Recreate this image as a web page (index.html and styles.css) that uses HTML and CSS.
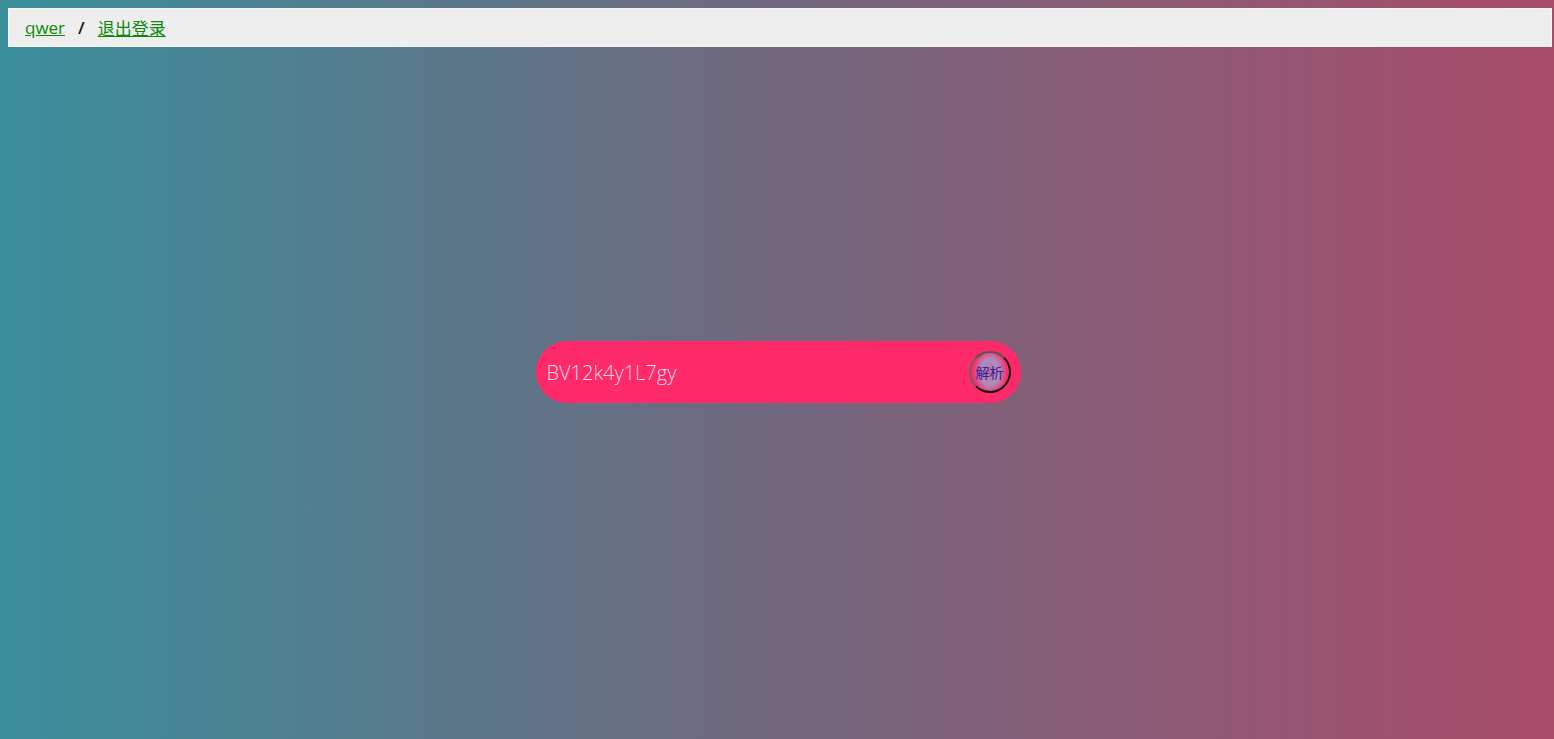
FILE: index.html
```html
<!DOCTYPE html>
<html lang="zh">
<head>
<meta charset="utf-8">
<title>解析</title>
<link rel="stylesheet" href="styles.css">
</head>
<body>
<div class="topbar">
  <a href="#" class="link">qwer</a>
  <span class="sep">/</span>
  <a href="#" class="link">退出登录</a>
</div>
<main class="stage">
  <form class="pill">
    <input class="field" type="text" value="BV12k4y1L7gy">
    <button class="go" type="button">解析</button>
  </form>
</main>
</body>
</html>
```
FILE: styles.css
```css
html, body {
  height: 100%;
}
html {
  background: linear-gradient(to right, #3a8f9b 0%, #6d6a80 46%, #a94c6a 100%);
}
body {
  margin: 8px 2px 8px 8px;
  height: calc(100% - 16px);
  background: transparent;
  font-family: "Open Sans", "Noto Sans CJK SC", sans-serif;
  display: flex;
  flex-direction: column;
}
.topbar {
  background: #eeeeee;
  height: 39px;
  box-sizing: border-box;
  border: 1px solid #f4f4f4;
  padding: 0 16px;
  display: flex;
  align-items: center;
  font-size: 17px;
}
.link {
  color: #078a07;
  text-decoration: underline;
}
.sep {
  margin: 0 13px;
  color: #111;
  font-weight: 600;
}
.stage {
  flex: 1;
  display: flex;
  justify-content: center;
  align-items: center;
  padding-right: 4px;
  padding-bottom: 34px;
}
.pill {
  width: 485px;
  height: 62px;
  border-radius: 31px;
  background: #fe2a6a;
  display: flex;
  align-items: center;
  box-sizing: border-box;
  padding: 0 10px 0 11px;
  margin: 0;
}
.field {
  flex: 1;
  border: none;
  outline: none;
  background: transparent;
  color: #ffdce6;
  font-family: "Open Sans", sans-serif;
  font-weight: 300;
  font-size: 20px;
  padding: 0;
  height: 40px;
  min-width: 0;
}
.go {
  width: 42px;
  height: 42px;
  border-radius: 50%;
  border: 2px solid #111;
  border-left-color: #666;
  border-top-color: #555;
  background: radial-gradient(ellipse 45% 60% at 50% 50%, #c26a9c 0%, #a792be 55%, #fe2a6a 100%);
  color: #3a1a9a;
  font-family: "Noto Sans CJK SC", sans-serif;
  font-size: 14px;
  padding: 0;
  cursor: pointer;
  display: flex;
  align-items: center;
  justify-content: center;
}
```
